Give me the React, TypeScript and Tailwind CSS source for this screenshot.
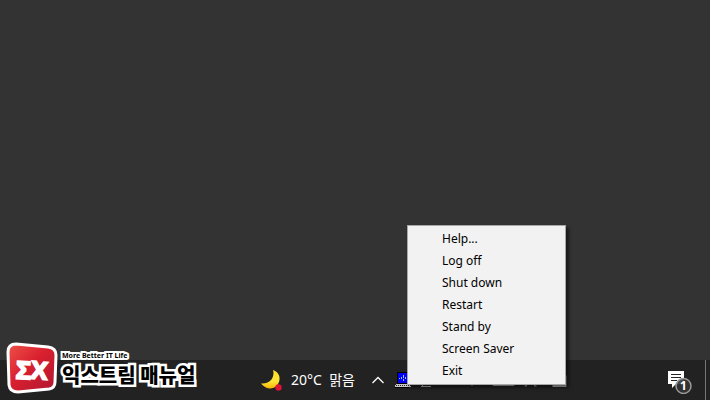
const menuItems = ["Help...", "Log off", "Shut down", "Restart", "Stand by", "Screen Saver", "Exit"];

const MoonIcon = () => (
  <svg width="22" height="22" viewBox="0 0 22 22" aria-hidden="true">
    <defs>
      <linearGradient id="moon" x1="0" y1="0" x2="0" y2="1">
        <stop offset="0" stopColor="#ffdf20" />
        <stop offset="0.600" stopColor="#ffe63a" />
        <stop offset="1" stopColor="#f7b500" />
      </linearGradient>
    </defs>
    <path d="M12 1 C16.500 2.500 19 6 18.500 10.500 C18 16 13.500 20 8.500 19.500 C5 19.300 2 17 0 14.500 C4 15 8 13.500 10.500 10.500 C12.500 7.500 13 4 12 1 Z" fill="url(#moon)" />
    <circle cx="17.500" cy="18.500" r="3.200" fill="#dc1438" />
  </svg>
);

const LaptopIcon = () => (
  <svg width="16" height="16" viewBox="0 0 16 16" shapeRendering="crispEdges" aria-hidden="true">
    <rect x="2" y="0" width="13" height="12" fill="#000" />
    <rect x="3" y="1" width="11" height="10" fill="#0000f5" />
    <path d="M8 3h1v2h-1z M8 7h1v2h-1z M6 5h1v2h-1z M10 5h1v2h-1z M8 5h1v1h-1z M4 6h1v1h-1z M12 6h1v1h-1z" fill="#8fc4ff" />
    <path d="M1 12h14l1 3H0z" fill="#c8c8c8" />
    <path d="M1 13.500h14" stroke="#222" strokeDasharray="1 1" />
    <path d="M0 15.500h14" stroke="#000" />
  </svg>
);

/* Only the lower edges show below the open menu */
const TrayIcons = () => (
  <svg width="148" height="16" viewBox="0 0 148 16" fill="none" stroke="#b8b8b8" aria-hidden="true">
    <path d="M2 14.500h10 M3.500 9v5" />
    <path d="M50 10l3 4 3-4" stroke="#777" />
    <path d="M74 5.500h21v8h-21z" />
    <path d="M107.500 8v6h-2 M115.500 8v6h2" />
    <path d="M134.500 4.500h12v9.500h-12z" strokeWidth="2" />
  </svg>
);

const NotificationIcon = () => (
  <svg width="26" height="28" viewBox="0 0 26 28" aria-hidden="true">
    <path d="M1 5h16v13H9l-4 4v-4H1z" fill="#fff" />
    <path d="M4 8.500h10 M4 11.500h10 M4 14.500h6" stroke="#222" />
    <circle cx="16.500" cy="20" r="7.500" fill="#333" fillOpacity="0.900" stroke="#999" strokeWidth="1.500" />
    <text x="16.500" y="24" textAnchor="middle" fill="#fff" fontSize="12" fontWeight="700" fontFamily="'Noto Sans', sans-serif">1</text>
  </svg>
);

const LogoMark = () => (
  <svg width="52" height="52" viewBox="0 0 52 52" aria-hidden="true">
    <defs>
      <linearGradient id="mark" x1="0" y1="0" x2="1" y2="1">
        <stop offset="0" stopColor="#ef5248" />
        <stop offset="0.450" stopColor="#d9202f" />
        <stop offset="1" stopColor="#ad1532" />
      </linearGradient>
    </defs>
    <path d="M10 2 L42 5 Q50 6 50 13 L49 40 Q49 46 43 47 L12 50 Q4 50 3 43 L2 10 Q2 2 10 2 Z" fill="url(#mark)" stroke="#fff" strokeWidth="3" />
    <g fill="#fff" stroke="#fff" strokeWidth="2" fontFamily="'Liberation Sans', sans-serif" fontWeight="700">
      <text x="10" y="37" fontSize="25" transform="rotate(3 17 28)">Σ</text>
      <text x="25" y="37" fontSize="25" transform="rotate(5 34 28)">X</text>
    </g>
  </svg>
);

const Logo = () => (
  <div className="absolute bottom-1.5 left-1.5 flex items-center gap-1">
    <LogoMark />
    <div className="flex flex-col gap-1 text-black">
      <p className="font-['Noto_Sans',sans-serif] text-[7px] leading-[10px] font-bold whitespace-nowrap [-webkit-text-stroke:4px_white] [paint-order:stroke_fill]">
        More Better IT Life
      </p>
      <p className="font-['Noto_Sans_CJK_KR',sans-serif] text-[20px] leading-5 font-black whitespace-nowrap [-webkit-text-stroke:5px_white] [paint-order:stroke_fill]">
        익스트림 매뉴얼
      </p>
    </div>
  </div>
);

const ContextMenu = () => (
  <div
    role="menu"
    className="absolute right-36 bottom-[15px] flex w-[159px] flex-col border border-[#a8a8a8] bg-[#f2f2f2] py-0.5 shadow-[3px_3px_3px_rgba(0,0,0,0.5)]"
  >
    {menuItems.map((item) => (
      <button
        key={item}
        role="menuitem"
        className="h-[22px] pl-[34px] text-left font-['Noto_Sans',sans-serif] text-xs text-black hover:bg-white"
      >
        {item}
      </button>
    ))}
  </div>
);

const Taskbar = () => (
  <footer className="flex h-10 items-center justify-end bg-[#222222] text-white">
    <button className="flex items-center gap-2 font-['Noto_Sans','Noto_Sans_CJK_KR',sans-serif] text-sm">
      <MoonIcon />
      <span>20°C&nbsp; 맑음</span>
    </button>
    <button aria-label="Show hidden icons" className="ml-4">
      <svg width="14" height="14" viewBox="0 0 14 14" fill="none" stroke="#fff" strokeWidth="1.300" aria-hidden="true">
        <path d="M1.500 10l5.500-5.500 5.500 5.500" />
      </svg>
    </button>
    <button aria-label="Power menu" className="ml-2.5">
      <LaptopIcon />
    </button>
    <div className="ml-2">
      <TrayIcons />
    </div>
    <button aria-label="Notifications" className="ml-[100px]">
      <NotificationIcon />
    </button>
    <button aria-label="Show desktop" className="ml-3 h-full w-[5px] border-l border-[#777777]" />
  </footer>
);

const App = () => {
  return (
    <div className="relative flex min-h-screen flex-col overflow-hidden bg-[#333333]">
      <main className="flex-1" />
      <Taskbar />
      <Logo />
      <ContextMenu />
    </div>
  );
};

export default App;
